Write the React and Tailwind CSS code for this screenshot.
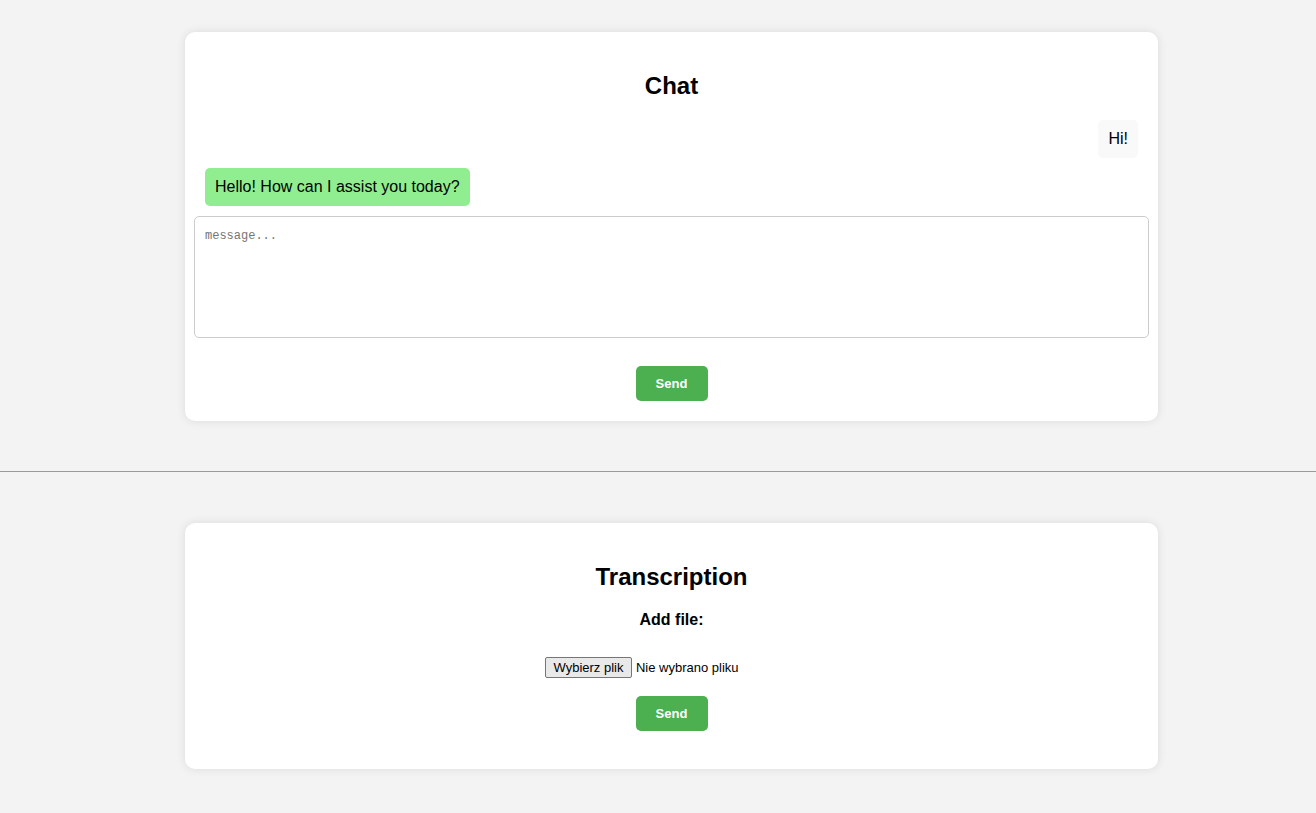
import { useState } from 'react'

const Card = ({ children, className = '' }) => (
  <div className="flex justify-center pl-[27px]">
    <div className={`w-[973px] bg-white rounded-[10px] shadow-[0_0_10px_rgba(0,0,0,0.1)] p-5 ${className}`}>
      {children}
    </div>
  </div>
)

const SendButton = () => (
  <button className="w-[72px] bg-[#4caf50] text-white font-bold text-[13px] leading-[15px] py-[10px] rounded-[5px] text-center">
    Send
  </button>
)

const App = () => {
  const [message, setMessage] = useState('')

  const messages = [
    { from: 'user', text: 'Hi!' },
    { from: 'bot', text: 'Hello! How can I assist you today?' },
  ]

  return (
    <div className="min-h-screen bg-[#f3f3f3] pt-8 pb-11 text-black font-['Liberation_Sans',Arial,sans-serif]">
      {/* Chat */}
      <Card>
        <h2 className="text-2xl leading-7 font-bold text-center my-5">Chat</h2>
        <div className="flex flex-col gap-[10px]">
          {messages.map((m, i) => (
            <div
              key={i}
              className={
                m.from === 'user'
                  ? 'self-end bg-[#f9f9f9] rounded-[5px] p-[10px] text-base leading-[18px]'
                  : 'self-start bg-[#90ee90] rounded-[5px] p-[10px] text-base leading-[18px]'
              }
            >
              {m.text}
            </div>
          ))}
        </div>
        <textarea
          value={message}
          onChange={(e) => setMessage(e.target.value)}
          placeholder="message..."
          className="block w-[calc(100%+22px)] -mx-[11px] mt-[10px] h-[122px] border border-[#ccc] rounded-[5px] px-[10px] pt-[11px] pb-[10px] font-['Liberation_Mono',monospace] text-[12px] leading-[16px] placeholder:text-[#757575] resize-none outline-none"
        />
        <div className="flex justify-center mt-7">
          <SendButton />
        </div>
      </Card>

      <div className="h-px bg-[#9a9a9a] mt-[50px] mb-[51px]" />

      {/* Transcription */}
      <Card className="pb-[38px]">
        <h2 className="text-2xl leading-7 font-bold text-center my-5">Transcription</h2>
        <div className="text-center font-bold text-base leading-[18px]">Add file:</div>
        <div className="w-[253px] mx-auto mt-7 flex items-center text-[13px] leading-[15px]">
          <span className="bg-[#e9e9e9] border border-[#767676] rounded-[2px] px-[7.5px] py-[2px] h-[21px] flex items-center">
            Wybierz plik
          </span>
          <span className="ml-1">Nie wybrano pliku</span>
        </div>
        <div className="flex justify-center mt-[18px]">
          <SendButton />
        </div>
      </Card>
    </div>
  )
}

export default App
